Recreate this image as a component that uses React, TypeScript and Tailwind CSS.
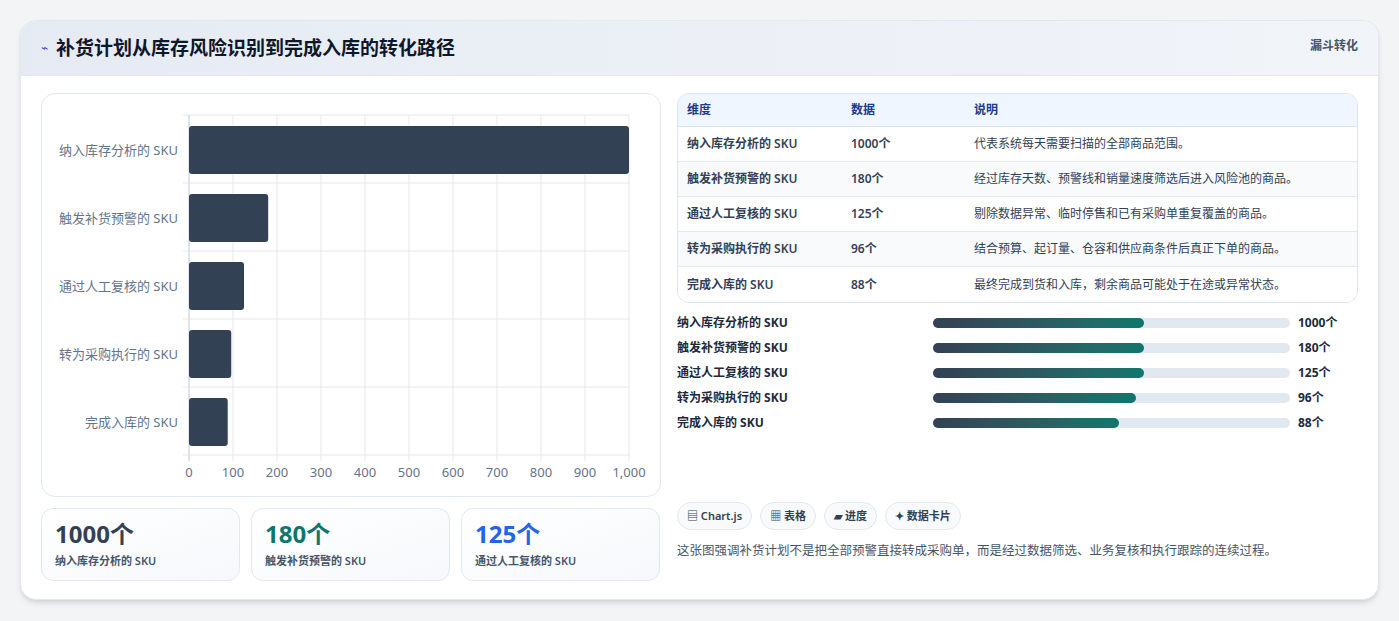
import React from "react";

const rows = [
  { n: "纳入库存分析的 SKU", v: 1000, d: "代表系统每天需要扫描的全部商品范围。", p: 59 },
  { n: "触发补货预警的 SKU", v: 180, d: "经过库存天数、预警线和销量速度筛选后进入风险池的商品。", p: 59 },
  { n: "通过人工复核的 SKU", v: 125, d: "剔除数据异常、临时停售和已有采购单重复覆盖的商品。", p: 59 },
  { n: "转为采购执行的 SKU", v: 96, d: "结合预算、起订量、仓容和供应商条件后真正下单的商品。", p: 57 },
  { n: "完成入库的 SKU", v: 88, d: "最终完成到货和入库，剩余商品可能处于在途或异常状态。", p: 52 },
];

const font = { fontFamily: '"Noto Sans","Noto Sans CJK SC",sans-serif' };

function Chart() {
  const x0 = 147, w = 440, y0 = 21, bh = 68;
  return (
    <svg width="619" height="403" className="block">
      {Array.from({ length: 11 }).map((_, i) => (
        <g key={i}>
          <line x1={x0 + i * 44} x2={x0 + i * 44} y1={y0} y2={y0 + 5 * bh + 6} stroke="#e5e7eb" />
          <text x={x0 + i * 44} y={383} textAnchor="middle" fontSize="13" fill="#64748b" style={font}>
            {i === 10 ? "1,000" : i * 100}
          </text>
        </g>
      ))}
      {Array.from({ length: 6 }).map((_, i) => (
        <line key={i} x1={x0 - 6} x2={x0 + w} y1={y0 + i * bh} y2={y0 + i * bh} stroke="#e5e7eb" />
      ))}
      <line x1={x0} x2={x0} y1={y0} y2={y0 + 5 * bh + 6} stroke="#cbd5e1" />
      {rows.map((r, i) => (
        <g key={i}>
          <rect x={x0} y={y0 + i * bh + 11} width={(r.v / 1000) * w} height={48} rx="3" fill="#334155" />
          <text x={136} y={y0 + i * bh + 40} textAnchor="end" fontSize="13" fill="#64748b" style={font}>
            {r.n}
          </text>
        </g>
      ))}
    </svg>
  );
}

export default function App() {
  return (
    <div className="w-[1399px] h-[621px] bg-[#f3f4f6] p-5" style={font}>
      <div className="rounded-[16px] bg-white border border-[#e2e8f0] shadow-md overflow-hidden h-[580px]">
        <div className="h-[55px] flex items-center justify-between px-5 bg-gradient-to-r from-[#e6ebf3] to-[#f1f4f9] border-b border-[#e5e7eb]">
          <div className="flex items-center gap-2">
            <span className="text-[#4f46e5] text-[12px]">⌁</span>
            <span className="text-[19px] font-bold text-[#0f172a]">补货计划从库存风险识别到完成入库的转化路径</span>
          </div>
          <span className="text-[12px] font-semibold text-[#475569] self-start mt-4">漏斗转化</span>
        </div>
        <div className="flex gap-4 px-5 pt-[17px]">
          <div className="w-[620px]">
            <div className="border border-[#e2e8f0] rounded-[14px] h-[404px] overflow-hidden">
              <Chart />
            </div>
            <div className="flex gap-[11px] mt-[11px]">
              {[
                ["1000个", "text-[#334155]"],
                ["180个", "text-[#0f766e]"],
                ["125个", "text-[#2563eb]"],
              ].map(([v, c], i) => (
                <div key={i} className="w-[199px] h-[73px] rounded-[12px] border border-[#e2e8f0] bg-gradient-to-br from-white to-[#f6f8fb] px-[13px] pt-[9px]">
                  <div className={`text-[24px] font-bold leading-[32px] ${c}`}>{v}</div>
                  <div className="text-[11px] font-semibold text-[#475569] mt-[3px]">{rows[i].n}</div>
                </div>
              ))}
            </div>
          </div>
          <div className="w-[686px] flex flex-col">
            <div className="border border-[#dbe3ee] rounded-[12px] overflow-hidden text-[12px]">
              <div className="flex h-[33px] items-center bg-[#eff6ff] text-[#1e3a8a] font-semibold px-[9px] border-b border-[#dbe3ee]">
                <div className="w-[164px]">维度</div>
                <div className="w-[123px]">数据</div>
                <div>说明</div>
              </div>
              {rows.map((r, i) => (
                <div key={i} className={`flex h-[35px] items-center px-[9px] text-[#334155] ${i % 2 ? "bg-[#f8fafc]" : "bg-white"} ${i < 4 ? "border-b border-[#e5e7eb]" : ""}`}>
                  <div className="w-[164px] font-semibold">{r.n}</div>
                  <div className="w-[123px] font-semibold">{r.v}个</div>
                  <div>{r.d}</div>
                </div>
              ))}
            </div>
            <div className="mt-[12px] flex flex-col gap-[9px]">
              {rows.map((r, i) => (
                <div key={i} className="flex items-center h-[16px] text-[12px] font-bold text-[#1e293b]">
                  <div className="w-[256px]">{r.n}</div>
                  <div className="w-[357px] h-[10px] rounded-full bg-[#e2e8f0]">
                    <div className="h-full rounded-full bg-gradient-to-r from-[#334155] to-[#0f766e]" style={{ width: `${r.p}%` }} />
                  </div>
                  <div className="ml-2">{r.v}个</div>
                </div>
              ))}
            </div>
            <div className="mt-auto mb-[20px]">
              <div className="flex gap-[8px]">
                {["▤ Chart.js", "▦ 表格", "▰ 进度", "✦ 数据卡片"].map((t) => (
                  <span key={t} className="h-[28px] px-[9px] flex items-center rounded-full border border-[#e2e8f0] bg-[#f8fafc] text-[11px] font-semibold text-[#334155]">{t}</span>
                ))}
              </div>
              <div className="text-[12.5px] text-[#475569] mt-[12px]">这张图强调补货计划不是把全部预警直接转成采购单，而是经过数据筛选、业务复核和执行跟踪的连续过程。</div>
            </div>
          </div>
        </div>
      </div>
    </div>
  );
}
